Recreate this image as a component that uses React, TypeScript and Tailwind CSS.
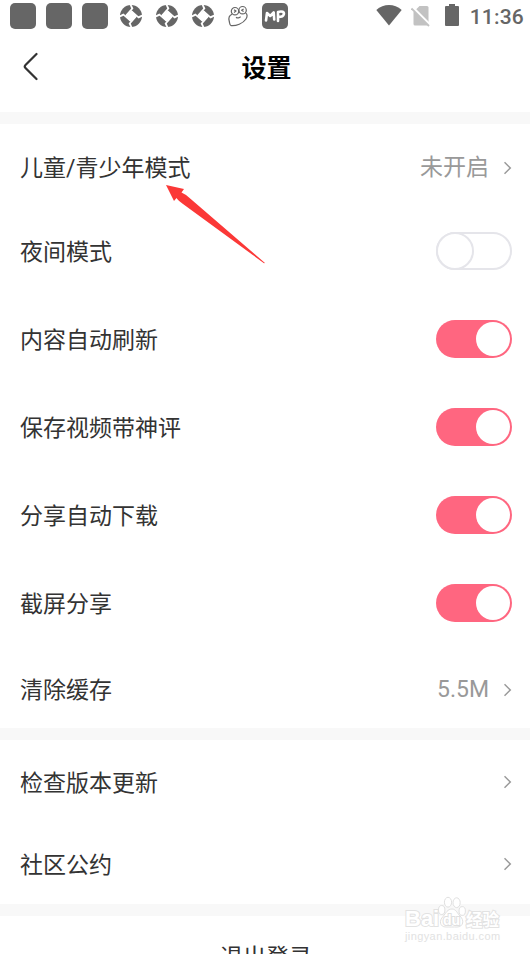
import { useState } from 'react'
import clsx from 'clsx'

function PinwheelIcon() {
  return (
    <svg width="24" height="24" viewBox="0 0 24 24">
      <circle cx="12" cy="12" r="11" fill="#666" />
      <path d="M12.6 6.4 L17.6 12.6 L11.4 17.6 L6.4 11.4 Z" fill="#fff" />
      {[0, 90, 180, 270].map(deg => (
        <path
          key={deg}
          transform={`rotate(${deg} 12 12)`}
          d="M6 11.6 L12.2 4.6 L10.6 0.6 L12.4 0.6 L14.4 4.4 L9 11 Z"
          fill="#fff"
        />
      ))}
    </svg>
  )
}

function FrogIcon() {
  return (
    <svg width="22" height="22" viewBox="0 0 22 22" fill="none" stroke="#666" strokeWidth="1.2" strokeLinejoin="round">
      <path d="M5 9.3 C2.3 10.5 1.4 13 2.2 16 C2.8 18.5 2.6 20.5 4 20.6 C9 21.2 16 18.5 19 14 C20.7 11.4 20.3 9 18.6 8" />
      <circle cx="8" cy="6.2" r="3.7" />
      <circle cx="15.6" cy="5.2" r="3.7" />
      <path d="M7 4.8 l2 1.3 -2 1.3 M16.6 3.9 l-2 1.3 2 1.3 M9 12.2 C10.5 13.4 12.5 13 13.6 11.6" />
    </svg>
  )
}

function StatusBar() {
  return (
    <div className="flex h-8 items-center">
      <div className="flex gap-2.5 pl-2.5">
        <span className="h-[26px] w-[26px] rounded-[5px] bg-[#666]" />
        <span className="h-[26px] w-[26px] rounded-[5px] bg-[#666]" />
        <span className="h-[26px] w-[26px] rounded-[5px] bg-[#666]" />
      </div>
      <div className="ml-[11px] flex items-center gap-3">
        <PinwheelIcon />
        <PinwheelIcon />
        <PinwheelIcon />
        <FrogIcon />
      </div>
      <span className="ml-[13px] flex h-[26px] w-[26px] items-center justify-center rounded-[5px] bg-[#666]">
        <svg width="22" height="14" viewBox="0 0 22 14" fill="none" stroke="#fff" strokeWidth="2.6" strokeLinecap="round" strokeLinejoin="round">
          <path d="M2 11.5 L3 4 L6.2 7 L9.7 3.5 L10.2 10.5" />
          <path d="M14 12 V3 C18 1.6 20.5 3 19.8 5.4 C19.3 7.2 17 8 14.5 8" />
        </svg>
      </span>
      <svg className="ml-auto" width="26" height="22" viewBox="0 0 26 22">
        <path d="M0.3 5 C7.5 -1.6 18.5 -1.6 25.7 5 L13 20.5 Z" fill="#666" />
      </svg>
      <svg className="ml-[9px]" width="20" height="22" viewBox="0 0 20 22">
        <path d="M8.5 1 H16 Q17.5 1 17.5 2.5 V19 Q17.5 20.5 16 20.5 H4 Q2.5 20.5 2.5 19 V7 Z" fill="#c2c2c2" />
        <path d="M0.5 1.5 L19 20" stroke="#fff" strokeWidth="3" />
        <path d="M0.5 3.5 L18 21" stroke="#c2c2c2" strokeWidth="1.8" />
      </svg>
      <svg className="ml-3.5 -mt-0.5" width="14" height="22" viewBox="0 0 14 22" fill="#666">
        <path d="M4 0 H10 V2 H13 Q14 2 14 3 V21 Q14 22 13 22 H1 Q0 22 0 21 V3 Q0 2 1 2 H4 Z" />
      </svg>
      <span className="ml-[11px] mr-1.5 pt-0.5 font-[Roboto,sans-serif] text-[21px] leading-7 font-medium tracking-[0.2px] text-[#666]">11:36</span>
    </div>
  )
}

function ChevronIcon() {
  return (
    <svg width="8" height="14" viewBox="0 0 8 14" fill="none" stroke="#999" strokeWidth="1.5">
      <path d="M0.5 1.2 L6.3 7 L0.5 12.8" />
    </svg>
  )
}

function LinkRow({ label, value, className }: { label: string; value?: string; className?: string }) {
  return (
    <button type="button" className={clsx('flex w-full items-center pr-[18px] pl-5 text-left', className)}>
      <span className={clsx('text-[#333]', value ? 'pt-0.5' : 'pt-1')}>{label}</span>
      {value && <span className="ml-auto pt-px text-[#999]">{value}</span>}
      <span className={value ? 'ml-[15px]' : 'ml-auto'}>
        <ChevronIcon />
      </span>
    </button>
  )
}

function ToggleRow({ label, defaultOn = false }: { label: string; defaultOn?: boolean }) {
  const [on, setOn] = useState(defaultOn)
  return (
    <div className="flex h-[88px] items-center justify-between pr-[18px] pl-5">
      <span className="pt-1 text-[#333]">{label}</span>
      <button
        type="button"
        role="switch"
        aria-checked={on}
        aria-label={label}
        onClick={() => setOn(!on)}
        className={clsx(
          'flex h-[38px] w-[76px] rounded-full',
          on ? 'justify-end bg-[#ff6680] p-0.5' : 'border-2 border-[#e5e5ea] bg-white',
        )}
      >
        <span
          className={clsx(
            'rounded-full bg-white',
            on ? 'h-[34px] w-[34px]' : '-mt-0.5 -ml-0.5 h-[38px] w-[38px] border-2 border-[#e5e5ea]',
          )}
        />
      </button>
    </div>
  )
}

function Watermark() {
  return (
    <div className="pointer-events-none absolute top-[896px] left-[405px] w-[96px] font-['Liberation_Sans','Noto_Sans_CJK_SC',sans-serif]">
      <div className="flex h-[33px] items-end text-white">
        <span className="w-[33px] text-[22px] leading-[20px] font-bold [paint-order:stroke] [-webkit-text-stroke:2px_#e2e2e2]">Bai</span>
        <svg className="shrink-0" width="28" height="33" viewBox="0 0 28 33" fill="#fff" stroke="#e0e0e0">
          <ellipse cx="3.7" cy="14" rx="3.2" ry="4.5" />
          <ellipse cx="10" cy="6.2" rx="3.6" ry="4.9" />
          <ellipse cx="18.6" cy="6.7" rx="3.6" ry="4.9" />
          <ellipse cx="24.2" cy="15" rx="3.2" ry="4.4" />
          <path d="M14 13 C18 13 19 17 22 20 C26.5 24 25.5 31 19 31 C16 31 12 31 8 31 C1.5 31 1 24.5 5 20.5 C8 17 9.5 13 14 13 Z" />
          <text x="13.6" y="28.5" textAnchor="middle" fontSize="14" fontWeight="bold" strokeWidth="2" paintOrder="stroke">du</text>
        </svg>
        <span className="text-[16.5px] leading-[18px] font-bold whitespace-nowrap [paint-order:stroke] [-webkit-text-stroke:2px_#e2e2e2]">经验</span>
      </div>
      <div className="mt-px text-[11px] leading-[13px] tracking-[0.4px] text-[#e2e2e2]">jingyan.baidu.com</div>
    </div>
  )
}

export default function App() {
  return (
    <div className="relative h-[954px] w-[530px] overflow-hidden bg-white font-[Roboto,'Noto_Sans_CJK_SC',sans-serif] text-[23px] leading-8">
      <StatusBar />

      <header className="grid h-20 grid-cols-3 items-start pt-[19px]">
        <button type="button" aria-label="返回" className="ml-[23px] w-4 pt-px">
          <svg width="16" height="30" viewBox="0 0 16 30" fill="none" stroke="#333" strokeWidth="2.2" strokeLinecap="round" strokeLinejoin="round">
            <path d="M13.5 2 L2.5 13 Q1 14.5 2.5 16 L13.5 27" />
          </svg>
        </button>
        <h1 className="pt-0.5 pl-[3px] text-center text-[25px] font-bold text-black">设置</h1>
      </header>

      <section className="border-t-12 border-[#f8f8f8]">
        <LinkRow label="儿童/青少年模式" value="未开启" className="h-[83px] pt-1" />
        <ToggleRow label="夜间模式" />
        <ToggleRow label="内容自动刷新" defaultOn />
        <ToggleRow label="保存视频带神评" defaultOn />
        <ToggleRow label="分享自动下载" defaultOn />
        <ToggleRow label="截屏分享" defaultOn />
        <LinkRow label="清除缓存" value="5.5M" className="h-[81px] pt-1" />
      </section>

      <section className="border-t-12 border-[#f8f8f8]">
        <LinkRow label="检查版本更新" className="h-[82px] pt-0.5" />
        <LinkRow label="社区公约" className="h-[82px] pt-0.5" />
      </section>

      <section className="border-t-12 border-[#f8f8f8]">
        <button type="button" className="h-[82px] w-full pt-px pl-0.5 text-center text-[#333]">退出登录</button>
      </section>

      {/* 指向青少年模式的箭头 */}
      <svg className="absolute top-[184px] left-[165px]" width="102" height="82" viewBox="0 0 102 82" fill="#fb3837">
        <path d="M1 1 L19 5 L16.5 8.5 Q20 10 24 13.5 L100 79 L99 79.2 L18 20 Q13 16.5 11.5 14 L9 17 Z" />
      </svg>

      <Watermark />
    </div>
  )
}
